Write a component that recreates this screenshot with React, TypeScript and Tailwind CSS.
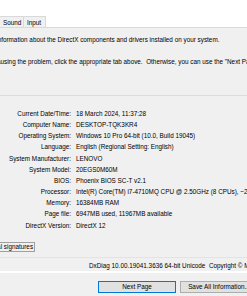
const SYSTEM_INFO: [string, string][] = [
  ['Current Date/Time:', '18 March 2024, 11:37:28'],
  ['Computer Name:', 'DESKTOP-TQK3KR4'],
  ['Operating System:', 'Windows 10 Pro 64-bit (10.0, Build 19045)'],
  ['Language:', 'English (Regional Setting: English)'],
  ['System Manufacturer:', 'LENOVO'],
  ['System Model:', '20EGS0M60M'],
  ['BIOS:', 'Phoenix BIOS SC-T v2.1'],
  ['Processor:', 'Intel(R) Core(TM) i7-4710MQ CPU @ 2.50GHz (8 CPUs), ~2.5GHz'],
  ['Memory:', '16384MB RAM'],
  ['Page file:', '6947MB used, 11967MB available'],
  ['DirectX Version:', 'DirectX 12'],
]

const TABS = [
  { label: 'System', width: 'w-[28px]' },
  { label: 'Display', width: 'w-[28px]' },
  { label: 'Sound', width: 'w-[24px]' },
  { label: 'Input', width: 'w-[22px]' },
]

export default function App() {
  return (
    <div className="flex h-[296px] w-[247px] flex-col overflow-hidden bg-[#f0f0f0] font-['Liberation_Sans',Arial,sans-serif] text-[6.35px] leading-[11px] text-black">
      {/* window top */}
      <div className="h-[16px] shrink-0 bg-white" />

      {/* tab strip */}
      <div className="flex h-[12px] shrink-0 border-b border-[#d9d9d9] bg-white">
        <div className="-ml-[56px] flex h-full">
          {TABS.map((tab) => (
            <div
              key={tab.label}
              className={`${tab.width} flex h-full items-center border-t border-r border-[#d9d9d9] bg-[#f0f0f0] pl-[3px]`}
            >
              {tab.label}
            </div>
          ))}
        </div>
      </div>

      {/* description */}
      <div className="-ml-[75px] mt-[6px] whitespace-pre">
        <p>This tool reports detailed information about the DirectX components and drivers installed on your system.</p>
        <p className="mt-[11px] -ml-[1px]">
          If you know what area is causing the problem, click the appropriate tab above.  Otherwise, you can use the "Next Page" button below to visit each page in sequence.
        </p>
      </div>

      {/* group box top edge */}
      <div className="mt-[28px] h-px shrink-0 bg-[#dcdcdc]" />

      {/* system information */}
      <div className="mt-[11.7px] flex flex-col">
        {SYSTEM_INFO.map(([label, value]) => (
          <div key={label} className="flex h-[11.2px] items-center whitespace-nowrap">
            <div className="flex w-[71px] shrink-0 justify-end">
              <span className="shrink-0">{label}</span>
            </div>
            <span className="ml-[5px]">{value}</span>
          </div>
        ))}
      </div>

      {/* whql checkbox */}
      <div className="-ml-[76px] mt-[11px] flex h-[10px] shrink-0 items-center whitespace-nowrap">
        <div className="h-[8px] w-[8px] border border-[#333] bg-white" />
        <div className="ml-[2px] flex h-[10px] items-center border border-[#a0a0a0] px-px">
          Check for WHQL digital signatures
        </div>
      </div>

      <div className="mt-[5px] h-px shrink-0 bg-[#e3e3e3]" />

      <div className="ml-[89px] mt-[2px] whitespace-pre">
        DxDiag 10.00.19041.3636 64-bit Unicode  Copyright © Microsoft. All rights reserved.
      </div>

      <div className="h-[2px] shrink-0 bg-white" />

      {/* buttons */}
      <div className="ml-[98px] mt-[8px] flex shrink-0 gap-[4px] whitespace-nowrap">
        <button
          type="button"
          className="flex h-[12px] w-[78px] shrink-0 items-center justify-center border border-[#0078d7] bg-[#e1e1e1]"
        >
          Next Page
        </button>
        <button
          type="button"
          className="flex h-[12px] w-[78px] shrink-0 items-center justify-center border border-[#adadad] bg-[#e1e1e1]"
        >
          Save All Information...
        </button>
      </div>
    </div>
  )
}
